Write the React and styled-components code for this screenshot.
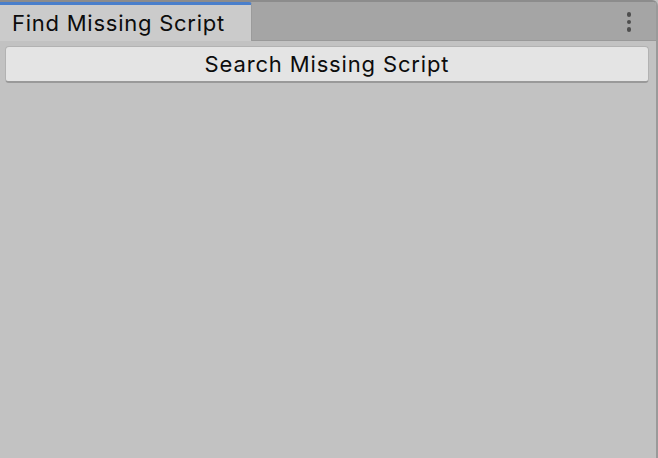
import styled, { createGlobalStyle } from "styled-components";

const GlobalStyle = createGlobalStyle`
  html, body {
    margin: 0;
    padding: 0;
    background: #c2c2c2;
  }
  body {
    font-family: Inter, "Noto Sans", "Liberation Sans", sans-serif;
  }
`;

const Window = styled.div`
  width: 658px;
  height: 458px;
  box-sizing: border-box;
  display: flex;
  flex-direction: column;
  background: #c2c2c2;
  border-top: 2px solid #8c8c8c;
  border-right: 2px solid #9a9a9a;
  border-top-right-radius: 6px;
  overflow: hidden;
`;

const TabBar = styled.div`
  height: 38px;
  flex: none;
  display: flex;
  align-items: stretch;
  background: #a5a5a5;
  border-bottom: 1px solid #999999;
`;

const Tab = styled.div`
  width: 252px;
  box-sizing: border-box;
  display: flex;
  align-items: center;
  padding: 0 0 1px 12px;
  background: #cbcbcb;
  border-top: 3px solid #4a7fcb;
  border-right: 1px solid #9b9b9b;
  border-top-right-radius: 3px;
  font-size: 22px;
  letter-spacing: 0.75px;
  color: #0c0c0c;
  margin-bottom: -1px;
`;

const Spacer = styled.div`
  flex: 1;
`;

const MenuButton = styled.div`
  width: 24px;
  display: flex;
  flex-direction: column;
  align-items: center;
  gap: 3px;
  padding-top: 10px;
  margin-right: 15px;
`;

const Dot = styled.span`
  width: 4.5px;
  height: 4.5px;
  border-radius: 50%;
  background: #4e4e4e;
`;

const Content = styled.div`
  flex: 1;
  padding: 5px 7px 0 5px;
`;

const ActionButton = styled.button`
  width: 100%;
  height: 37px;
  box-sizing: border-box;
  display: flex;
  align-items: center;
  justify-content: center;
  background: #e4e4e4;
  border: 1px solid #b2b2b2;
  border-bottom: 2px solid #999999;
  border-radius: 4px;
  font-family: Inter, "Noto Sans", "Liberation Sans", sans-serif;
  font-size: 22px;
  letter-spacing: 0.85px;
  color: #0c0c0c;
  padding: 0 0 1px;
  cursor: pointer;
`;

export default function App() {
  return (
    <>
      <GlobalStyle />
      <Window>
        <TabBar>
          <Tab>Find Missing Script</Tab>
          <Spacer />
          <MenuButton>
            <Dot />
            <Dot />
            <Dot />
          </MenuButton>
        </TabBar>
        <Content>
          <ActionButton>Search Missing Script</ActionButton>
        </Content>
      </Window>
    </>
  );
}
